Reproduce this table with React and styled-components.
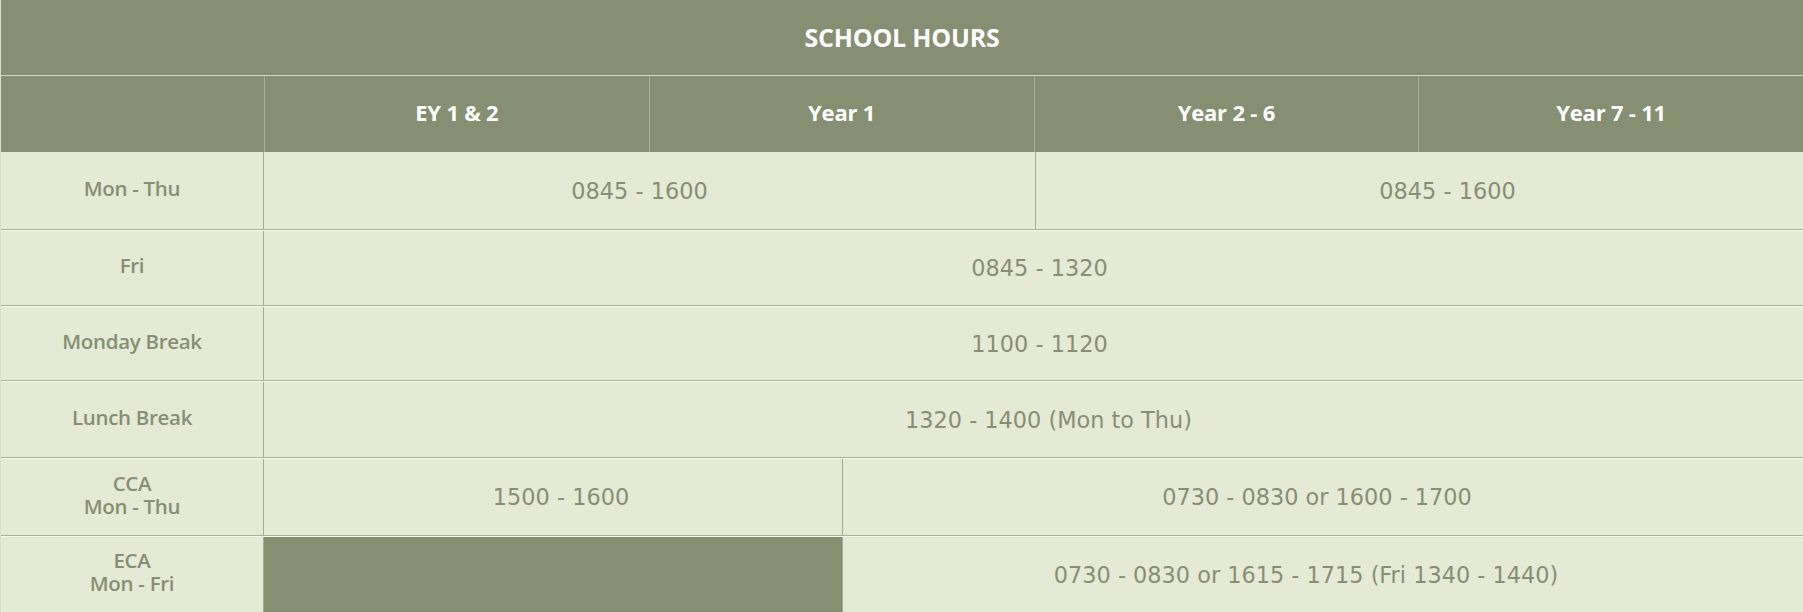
import React from "react";
import styled, { createGlobalStyle } from "styled-components";

const GlobalStyle = createGlobalStyle`
  html, body {
    margin: 0;
    padding: 0;
    background: #e5ead5;
  }
  * {
    box-sizing: border-box;
  }
`;

const Table = styled.div`
  width: 1803px;
  height: 612px;
  display: flex;
  flex-direction: column;
  background: #e5ead5;
  border-left: 1px solid #d9dfca;
`;

const TitleRow = styled.div`
  height: 76px;
  flex: none;
  display: flex;
  align-items: center;
  justify-content: center;
  padding-bottom: 2px;
  background: #868f72;
  border-bottom: 1px solid #d3d9c5;
  color: #fff;
  font-family: "Open Sans", "Liberation Sans", sans-serif;
  font-weight: 700;
  font-size: 25px;
  letter-spacing: -0.2px;
`;

const Row = styled.div`
  display: grid;
  grid-template-columns: ${(p) => p.$cols};
  height: ${(p) => p.$h}px;
  flex: none;
  background: ${(p) => (p.$head ? "#868f72" : "#e5ead5")};
  border-bottom: ${(p) => (p.$head || p.$last ? "none" : "1px solid #aab09b")};
  border-top: ${(p) => (p.$head || p.$first ? "none" : "1px solid #f6f8ee")};
`;

const HeadCell = styled.div`
  display: flex;
  align-items: center;
  justify-content: center;
  padding-bottom: 4px;
  color: #fff;
  font-family: "Open Sans", "Liberation Sans", sans-serif;
  font-weight: 700;
  font-size: 22px;
  letter-spacing: -0.2px;
  & + & {
    border-left: 1px solid #a9b095;
  }
`;

const Label = styled.div`
  display: flex;
  flex-direction: column;
  align-items: center;
  justify-content: center;
  padding-bottom: 5px;
  color: #868f72;
  font-family: "Open Sans", "Liberation Sans", sans-serif;
  font-weight: 600;
  font-size: 20.5px;
  line-height: 23px;
  letter-spacing: -0.3px;
  border-right: 1px solid #a4aa95;
`;

const Time = styled.div`
  display: flex;
  align-items: center;
  justify-content: center;
  color: #878f73;
  font-family: "DejaVu Sans", Verdana, sans-serif;
  font-size: 22.4px;
  padding-left: ${(p) => Math.max(0, (p.$shift || 0) * 2)}px;
  padding-right: ${(p) => Math.max(0, -(p.$shift || 0) * 2)}px;
  background: ${(p) => (p.$blank ? "#868f72" : "transparent")};
  & + & {
    border-left: 1px solid #a4aa95;
  }
`;

const FIRST = "263px";

const rows = [
  {
    label: ["Mon - Thu"],
    h: 78,
    cols: `${FIRST} 771px 1fr`,
    cells: [
      { text: "0845 - 1600", shift: -10 },
      { text: "0845 - 1600", shift: 28 },
    ],
  },
  { label: ["Fri"], h: 76, cols: `${FIRST} 1fr`, cells: [{ text: "0845 - 1320", shift: 6 }] },
  { label: ["Monday Break"], h: 75, cols: `${FIRST} 1fr`, cells: [{ text: "1100 - 1120", shift: 6 }] },
  {
    label: ["Lunch Break"],
    h: 77,
    cols: `${FIRST} 1fr`,
    cells: [{ text: "1320 - 1400 (Mon to Thu)", shift: 15 }],
  },
  {
    label: ["CCA", "Mon - Thu"],
    h: 78,
    cols: `${FIRST} 578px 1fr`,
    cells: [
      { text: "1500 - 1600", shift: 8 },
      { text: "0730 - 0830 or 1600 - 1700", shift: -6 },
    ],
  },
  {
    label: ["ECA", "Mon - Fri"],
    h: 76,
    cols: `${FIRST} 578px 1fr`,
    cells: [
      { text: "", blank: true },
      { text: "0730 - 0830 or 1615 - 1715 (Fri 1340 - 1440)", shift: -17 },
    ],
  },
];

const years = ["EY 1 & 2", "Year 1", "Year 2 - 6", "Year 7 - 11"];

export default function App() {
  return (
    <>
      <GlobalStyle />
      <Table>
        <TitleRow>SCHOOL HOURS</TitleRow>
        <Row $head $h={76} $cols={`${FIRST} repeat(4, 1fr)`}>
          <HeadCell />
          {years.map((y) => (
            <HeadCell key={y}>{y}</HeadCell>
          ))}
        </Row>
        {rows.map((r, i) => (
          <Row key={i} $h={r.h} $cols={r.cols} $first={i === 0} $last={i === rows.length - 1}>
            <Label>
              {r.label.map((l) => (
                <span key={l}>{l}</span>
              ))}
            </Label>
            {r.cells.map((c, j) => (
              <Time key={j} $shift={c.shift} $blank={c.blank}>
                {c.text}
              </Time>
            ))}
          </Row>
        ))}
      </Table>
    </>
  );
}
